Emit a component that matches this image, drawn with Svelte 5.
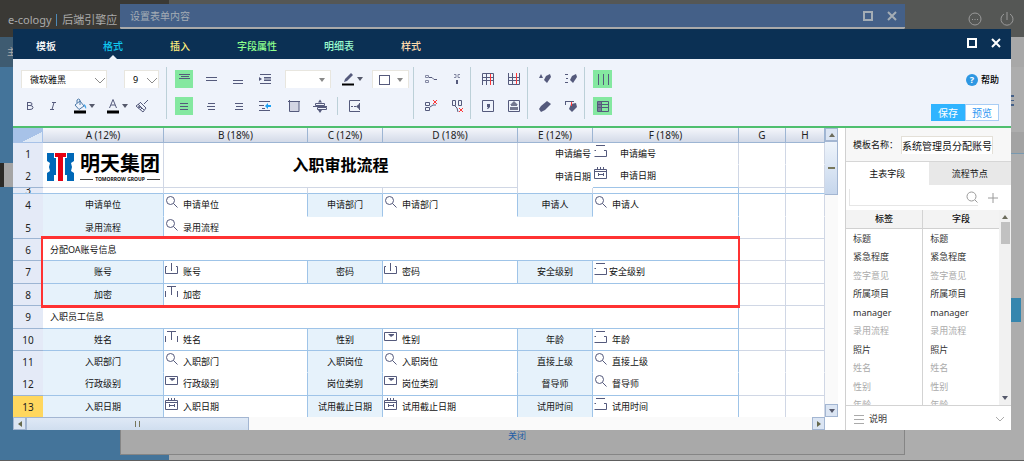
<script>
  const ink = "#555a7c";

  // strokes of the 16x16 toolbar icons, f marks a filled shape
  const icons = {
    bold: [{ d: "M5.5 4v8M5 4.5h3q2 0 2 1.5t-2 1.5h-2.5M8 7.5q3 0 3 2t-3 2h-3" }],
    italic: [{ d: "M7 4.5h4M5 11.5h4M9 4.5l-2 7" }],
    bucket: [
      { d: "M3 7l5-4 4 5-5 3.5zM5 5V2q1.5-2 3 0v5", c: "#4b78a8" },
      { d: "M12 6q3 2 2 5l-2-3", c: "#49a6e8", f: true },
      { d: "M2 12.5h12v3H2z", c: "#000", f: true }
    ],
    color: [{ d: "M4.5 10L8 1.5l3.5 8.5M6 7h4" }, { d: "M2 12.5h12v3H2z", c: "#000", f: true }],
    brush: [{ d: "M14 2l-4 4M6 4l6 6M4 6l6 6M2 8l4-3M4 8l2 1M4 10l3-1M6 12l2-2M9 14l3-4M2 8l7 6" }],
    top: [{ d: "M3 3.5h11M5 5.5h8M3 7.5h11" }],
    middle: [{ d: "M3 6.5h11M3 9.5h11" }],
    bottom: [{ d: "M3 9.5h10M3 12.5h10" }],
    indent: [{ d: "M3 3.5h11M7 6.5h7M7 9.5h7M3 12.5h11M7 8h7" }, { d: "M2 6l3 2-3 2z", f: true }],
    left: [{ d: "M4 5.5h8M4 8.5h8M4 11.5h8" }],
    center: [{ d: "M5 5.5h7M4 8.5h8M5 11.5h7" }],
    right: [{ d: "M5 5.5h8M6 8.5h7M5 11.5h8" }],
    wrap: [
      { d: "M2 3.5h11M2 7.5h5M2 12.5h11M5 10.5h3" },
      { d: "M8 8l3-3v2h3v2h-3v2z", c: "#1da0f2", f: true }
    ],
    pencil: [
      { d: "M4 11l1-3 6-6 2 2-6 6z", f: true },
      { d: "M2 12.5h12v2H2z", c: "#000", f: true }
    ],
    cols: [{ d: "M4 4h9v9H4z", c: "#d3d5e3", f: true }, { d: "M3.5 2v11.5h9.5v-10M2 3.5h12" }],
    split: [{ d: "M3.5 5.5h9v2h-9zM5.5 9.5h9v2h-9zM1 8.5h14" }, { d: "M8 1.5l2 3H6zM8 15l2-3H6z", f: true }],
    width: [{ d: "M13 2.5H2.5v11H13M4 8.5h2M7 8.5h2M12.5 5v7" }, { d: "M9 8.5l3-2.5v5z", f: true }],
    mergeA: [
      { d: "M2.5 4.5h3v2h-3zM2.5 9.5h3v2h-3z", c: "#8488a3" },
      { d: "M6 6.5h3l2 2h3" }
    ],
    mergeB: [{ d: "M5 3.5h2v3H5M11 3.5H9v3h2", c: "#8488a3" }, { d: "M7 9h2v4H7z", f: true }],
    cutA: [{ d: "M2.5 4.5h4v3h-4zM2.5 9.5h4v3h-4zM7 9l3-2h3" }, { d: "M10 2l4 4M14 2l-4 4", c: "#ff3636" }],
    cutB: [{ d: "M3.5 2.5h3v5h-3zM9.5 2.5h3v5h-3zM6 8l2 2 1 4" }, { d: "M10 10l4 4M14 10l-4 4", c: "#ff3636" }],
    gridA: [{ d: "M2.5 14V2.5h11V14M2 6.5h12M2 9.5h12M6.5 3v11" }, { d: "M10.5 3v11", c: "#ff3636" }],
    gridB: [{ d: "M2.5 2v11.5h11V2M2 6.5h12M2 9.5h12M6.5 2v11" }, { d: "M10.5 2v11", c: "#ff3636" }],
    comma: [{ d: "M2.5 2.5h11v11h-11z" }, { d: "M7 6h3v3l-2 2H7l1-2H7z", f: true }],
    stamp: [{ d: "M2.5 2.5h11v11h-11z" }, { d: "M8 3l4 4h-1v1H5V7H4zM4 9h8v3H4z", c: "#74788f", f: true }],
    eraseA: [{ d: "M9 5l4-2 1 3-4 6-3-3z", f: true }, { d: "M2 7l2-4 2 4z", f: true }],
    eraseB: [{ d: "M9 5l4-2 1 3-4 6-3-3z", f: true }, { d: "M2 3.5h3M3 7.5h2M2 11.5h3" }],
    erase: [{ d: "M4 8l6-5 4 3-6 6-4 2-2-3z", f: true }],
    eraseC: [{ d: "M2 3.5h9M2.5 3v4" }, { d: "M8 6l5-1 1 4-5 5-3-3z", f: true }, { d: "M8.5 4v4", c: "#ff3636" }],
    lines: [{ d: "M3.5 3v11M8.5 3v11M13.5 3v11" }],
    table: [
      { d: "M3 4h4v9H3z", c: "#777c95", f: true },
      { d: "M2.5 3.5h11v10h-11zM6.5 3v10M3 6.5h11M3 9.5h11" }
    ],
    search: [{ d: "M10.5 5.5a4 4 0 1 1-8 0a4 4 0 1 1 8 0zM9.5 8.5l4 4" }],
    text: [{ d: "M1.5 6v6M13.5 6v6M3 1.5h9M7.5 2v8" }],
    textin: [{ d: "M3 4.500H1.500v7h12v-7H12M7.500 1v8" }],
    number: [{ d: "M3 1.5h9M3 6.5H1.5M1.5 12.5h12v-6H11" }],
    select: [{ d: "M1.5 2.5h12v8h-12z" }, { d: "M5 4h6v1L8 7z", f: true }],
    date: [{ d: "M1.5 3.5h12v9h-12zM1.5 5.5h12M4.5 1v3M7.5 1v3M10.5 1v3M5.5 7v3M10.5 7v3M6 8.5h4" }]
  };

  const tabs = [
    { name: "模板", cls: "white" },
    { name: "格式", cls: "cyan" },
    { name: "插入", cls: "yellow" },
    { name: "字段属性", cls: "green" },
    { name: "明细表", cls: "mint" },
    { name: "样式", cls: "sand" }
  ];
  let tab = $state("格式");

  const pairs = [
    [["mergeA", "mergeB"], ["cutA", "cutB"]],
    [["gridA", "gridB"], ["comma", "stamp"]],
    [["eraseA", "eraseB"], ["erase", "eraseC"]]
  ];

  const heads = ["A (12%)", "B (18%)", "C (12%)", "D (18%)", "E (12%)", "F (18%)", "G", "H"];

  // each row holds label / icon pairs, a title row spans the form
  const rows = [
    { n: 4, tall: true, open: true, cells: [["申请单位", "search"], ["申请部门", "search"], ["申请人", "search"]] },
    { n: 5, cells: [["录用流程", "search"]] },
    { n: 6, title: "分配OA账号信息" },
    { n: 7, tall: true, cells: [["账号", "textin"], ["密码", "textin"], ["安全级别", "number", "near"]] },
    { n: 8, cells: [["加密", "text"]] },
    { n: 9, tall: true, title: "入职员工信息" },
    { n: 10, cells: [["姓名", "text"], ["性别", "select"], ["年龄", "number"]] },
    { n: 11, open: true, cells: [["入职部门", "search"], ["入职岗位", "search"], ["直接上级", "search"]] },
    { n: 12, tall: true, cells: [["行政级别", "select"], ["岗位类别", "select"], ["督导师", "search"]] },
    { n: 13, last: true, cells: [["入职日期", "date"], ["试用截止日期", "date"], ["试用时间", "number"]] }
  ];

  const fields = [
    ["标题", false],
    ["紧急程度", false],
    ["签字意见", true],
    ["所属项目", false],
    ["manager", false],
    ["录用流程", true],
    ["照片", false],
    ["姓名", true],
    ["性别", true],
    ["年龄", true]
  ];
  let side = $state("主表字段");
  let tplname = $state("系统管理员分配账号流程");
  let query = $state("");
</script>

{#snippet icon(name)}
  <svg class="icon" viewBox="0 0 16 16" aria-hidden="true">
    {#each icons[name] as p}
      <path d={p.d} fill={p.f ? p.c || ink : "none"} stroke={p.f ? "none" : p.c || ink} />
    {/each}
  </svg>
{/snippet}

{#snippet tool(name, on)}
  <button class="tool" class:on aria-label={name}>{@render icon(name)}</button>
{/snippet}

{#snippet combo(name)}
  <button class="combo" aria-label={name}>{@render icon(name)}<i class="caret"></i></button>
{/snippet}

{#snippet winbtns()}
  <div class="winbtns">
    <button aria-label="maximize">
      <svg viewBox="0 0 10 10"><path d="M1 1h8v8H1z" /></svg>
    </button>
    <button aria-label="close">
      <svg viewBox="0 0 10 10"><path d="M1 1l8 8M9 1L1 9" /></svg>
    </button>
  </div>
{/snippet}

{#snippet field(text, name, pos)}
  <div class="field {pos || ''}">{@render icon(name)}<span>{text}</span></div>
{/snippet}

<div class="desktop">
  <header class="top">
    <div class="brand">e-cology <b></b> 后端引擎应</div>
    <div class="user">
      <svg viewBox="0 0 14 14"><circle cx="7" cy="7" r="6" /><path d="M4 7.5h1M6.5 7.5h1M9 7.5h1" /></svg>
      <svg viewBox="0 0 14 14"><path d="M7 0v8M4 2a6 6 0 1 0 6 0" /></svg>
    </div>
  </header>
  <div class="subbar"><div>主</div></div>
  <div class="page">
    <div class="menu"><div class="current"></div></div>
    <div class="content">
      <div class="burger"></div>
      <div class="band"></div>
      <div class="edge"></div>
    </div>
  </div>

  <section class="back">
    <div class="backhead">设置表单内容 {@render winbtns()}</div>
    <div class="backfoot"><a href="#close">关闭</a></div>
  </section>

  <main class="window">
    <nav class="tabs">
      {#each tabs as t}
        <button class={t.cls} class:active={tab === t.name} onclick={() => (tab = t.name)}>{t.name}</button>
      {/each}
      {@render winbtns()}
    </nav>

    <div class="toolbar">
      <div class="group first">
        <div class="line spread">
          <label class="pick font">
            <select aria-label="字体"><option>微软雅黑</option></select>
            <svg viewBox="0 0 10 6"><path d="M0 0l5 5 5-5" /></svg>
          </label>
          <label class="pick size">
            <select aria-label="字号"><option>9</option></select>
            <svg viewBox="0 0 10 6"><path d="M0 0l5 5 5-5" /></svg>
          </label>
        </div>
        <div class="line tight">
          {@render tool("bold")}
          {@render tool("italic")}
          {@render combo("bucket")}
          {@render combo("color")}
          {@render tool("brush")}
        </div>
      </div>
      <hr />
      <div class="group aligns">
        <div class="line wide">
          {@render tool("top", true)}
          {@render tool("middle")}
          {@render tool("bottom")}
          {@render tool("indent")}
        </div>
        <div class="line wide">
          {@render tool("left", true)}
          {@render tool("center")}
          {@render tool("right")}
          {@render tool("wrap")}
        </div>
      </div>
      <div class="group borders">
        <div class="line spread">
          <button class="drop" aria-label="线型"><i class="caret"></i></button>
          {@render combo("pencil")}
          <i></i>
          <button class="drop small" aria-label="边框"><b></b><i class="caret"></i></button>
        </div>
        <div class="line">
          {@render tool("cols")}
          {@render tool("split")}
          <hr />
          {@render tool("width")}
        </div>
      </div>
      <hr />
      {#each pairs as pair}
        <div class="group">
          {#each pair as line}
            <div class="line">
              {#each line as name}
                {@render tool(name)}
              {/each}
            </div>
          {/each}
        </div>
        <hr />
      {/each}
      <div class="group last">
        <div class="line">{@render tool("lines", true)}</div>
        <div class="line">{@render tool("table", true)}</div>
      </div>
      <div class="actions">
        <button class="help"><span>?</span>帮助</button>
        <div>
          <button class="save">保存</button><button class="preview">预览</button>
        </div>
      </div>
    </div>

    <div class="work">
      <div class="sheet">
        <div class="gridrow">
          <table class="grid">
            <colgroup>
              <col class="w30" /><col class="w121" /><col class="w144" /><col class="w75" /><col class="w135" />
              <col class="w75" /><col class="w146" /><col class="w47" /><col />
            </colgroup>
            <thead>
              <tr>
                <th class="corner"></th>
                {#each heads as h}<th>{h}</th>{/each}
              </tr>
            </thead>
            <tbody>
              <tr class="open">
                <th>1</th>
                <td rowspan="2" class="pale">
                  <div class="logo">
                    <svg viewBox="0 0 27 28" aria-hidden="true">
                      <path fill="#0068b7" d="M0 0h7v5h2v17H7v6H0v-8l3-2-1-4 1-4-3-2zM27 0h-7v5h-2v17h2v6h7v-8l-3-2 1-4-1-4 3-2z" />
                      <path fill="#e60012" d="M8 0h11v4h-3v24h-5V4H8z" />
                    </svg>
                    <div>
                      <strong>明天集团</strong>
                      <small>TOMORROW GROUP</small>
                    </div>
                  </div>
                </td>
                <td rowspan="2" colspan="3" class="pale heading">入职审批流程</td>
                <td class="right">申请编号</td>
                <td class="bare">{@render field("申请编号", "number", "far")}</td>
                <td class="pale"></td>
                <td class="pale"></td>
              </tr>
              <tr class="tall">
                <th>2</th>
                <td class="right">申请日期</td>
                <td class="under">{@render field("申请日期", "date", "far")}</td>
                <td class="pale"></td>
                <td class="pale"></td>
              </tr>
              <tr class="thin">
                <th><div>3</div></th>
                {#each heads as h, i}<td class:pale={i < 5 || i > 5}></td>{/each}
              </tr>
              {#each rows as r}
                <tr class:tall={r.tall} class:open={r.open} class:last={r.last}>
                  <th>{r.n}</th>
                  {#if r.title}
                    <td colspan="6" class="title">{r.title}</td>
                  {:else}
                    {#each r.cells as c}
                      <td class="label">{c[0]}</td>
                      <td colspan={r.cells.length === 1 ? 5 : 1}>{@render field(c[0], c[1], c[2])}</td>
                    {/each}
                  {/if}
                  <td class="pale"></td>
                  <td class="pale"></td>
                </tr>
              {/each}
            </tbody>
          </table>
          <div class="vbar">
            <button aria-label="up"><i class="caret up"></i></button>
            <div class="thumb"></div>
            <button aria-label="down"><i class="caret"></i></button>
          </div>
        </div>
        <div class="hbar">
          <button aria-label="left"><i class="caret lt"></i></button>
          <div class="thumb"></div>
          <button aria-label="right"><i class="caret rt"></i></button>
        </div>
        <div class="marker"></div>
      </div>

      <aside class="panel">
        <div class="tplname">
          <label for="tplname">模板名称：</label>
          <input id="tplname" bind:value={tplname} />
        </div>
        <div class="sidetabs">
          {#each ["主表字段", "流程节点"] as s}
            <button class:active={side === s} onclick={() => (side = s)}>{s}</button>
          {/each}
        </div>
        <div class="find">
          <div>
            <input aria-label="搜索" bind:value={query} />
            <svg viewBox="0 0 12 12"><circle cx="5.5" cy="5.5" r="4.5" /><path d="M9 9l2.5 2.5" /></svg>
          </div>
          <button aria-label="add"><svg viewBox="0 0 12 12"><path d="M1 6h10M6 1v10" /></svg></button>
        </div>
        <div class="list">
          <table>
            <thead>
              <tr><th>标签</th><th>字段</th></tr>
            </thead>
            <tbody>
              {#each fields as f}
                <tr class:used={f[1]}><td>{f[0]}</td><td>{f[0]}</td></tr>
              {/each}
            </tbody>
          </table>
          <div class="bar">
            <i class="caret up"></i>
            <div class="thumb"></div>
            <i class="caret"></i>
          </div>
        </div>
        <button class="note">
          <svg viewBox="0 0 10 10"><path d="M0 1.5h10M0 5.5h10M0 9.5h10" /></svg>
          说明
          <svg class="chev" viewBox="0 0 10 10"><path d="M1 3l4 4 4-4" /></svg>
        </button>
      </aside>
    </div>
  </main>
</div>

<style>
  :global(body) {
    background: #ababab;
  }

  .desktop {
    position: relative;
    display: flex;
    flex-direction: column;
    min-height: 100vh;
    overflow: hidden;
    font-family: "Noto Sans", "Noto Sans CJK SC", sans-serif;
    font-size: 9px;
    line-height: 12px;
    color: #111;
  }

  .desktop :global(*) {
    box-sizing: border-box;
  }

  button,
  input,
  select {
    font: inherit;
    color: inherit;
    margin: 0;
    padding: 0;
    border: 0;
    background: none;
    border-radius: 0;
    outline: none;
    min-width: 0;
  }

  button {
    display: flex;
    align-items: center;
    justify-content: center;
    cursor: pointer;
  }

  hr {
    width: 1px;
    margin: 0;
    border: 0;
    background: #bcd0d8;
  }

  .icon {
    width: 16px;
    height: 16px;
    flex: none;
  }

  .caret {
    border: 3px solid transparent;
    border-top: 4px solid #55596b;
    border-bottom: 0;
  }

  .caret.up {
    border-top: 0;
    border-bottom: 4px solid #6c6c5c;
  }

  .caret.lt,
  .caret.rt {
    border: 3px solid transparent;
    border-left: 4px solid #66694d;
    border-right: 0;
  }

  .caret.lt {
    transform: scaleX(-1);
  }

  /* page behind the windows */
  .top {
    display: flex;
    justify-content: space-between;
    height: 37px;
    background: #555755;
    color: #aaa;
  }

  .brand {
    width: 169px;
    padding: 12px 0 0 8px;
    line-height: 16px;
    white-space: nowrap;
    overflow: hidden;
    background: #3a3935;
    font-size: 11px;
  }

  .brand b {
    display: inline-block;
    width: 1px;
    height: 12px;
    margin: 0 2px;
    vertical-align: -2px;
    background: #4d8ab8;
  }

  .user {
    display: flex;
    align-items: center;
    gap: 18px;
    padding-right: 10px;
  }

  .user svg {
    width: 14px;
    height: 14px;
    fill: none;
    stroke: #9a9a9a;
  }

  .subbar {
    height: 30px;
    background: #a8a8a8;
  }

  .subbar div {
    width: 169px;
    height: 30px;
    padding-left: 7px;
    line-height: 30px;
    background: #3e5b71;
    color: #aaa;
  }

  .page {
    flex: 1;
    display: flex;
    border-bottom: 1px solid #5e5e5e;
  }

  .menu {
    width: 169px;
    padding-top: 96px;
    background: #44749a;
  }

  .current {
    height: 24px;
    border-left: 4px solid #2b2a27;
    background: #a5a5a5;
  }

  .content {
    flex: 1;
    display: flex;
    flex-direction: column;
    align-items: flex-end;
    padding-top: 28px;
    background: #adadad;
  }

  .burger {
    width: 14px;
    height: 11px;
    margin-right: 10px;
    border: solid #446088;
    border-width: 2px 0;
    background: linear-gradient(#446088, #446088) center / 100% 1px no-repeat;
  }

  .band {
    width: 40px;
    height: 22px;
    margin-top: 26px;
    border-bottom: 1px solid #7899b0;
    background: #a3a3a3;
  }

  .edge {
    width: 30px;
    height: 24px;
    margin: 144px 3px 0 0;
    background: #3686ae;
  }

  .back {
    position: absolute;
    left: 120px;
    right: 119px;
    top: 4px;
    bottom: 6px;
    display: flex;
    flex-direction: column;
    justify-content: space-between;
    border: 1px solid #858585;
    border-top: 0;
    background: #a9a9a9;
  }

  .backhead {
    display: flex;
    align-items: center;
    height: 24px;
    margin: 0 -1px;
    padding: 0 8px 0 10px;
    border-bottom: 1px solid #aaa;
    background: #446088;
    color: #a4adb5;
    font-size: 10px;
  }

  .backfoot {
    height: 24px;
    text-align: center;
  }

  .backfoot a {
    color: #1d5da6;
    margin-left: 9px;
    text-decoration: none;
  }

  .winbtns {
    display: flex;
    gap: 14px;
    margin-left: auto;
  }

  .winbtns svg {
    width: 10px;
    height: 10px;
    fill: none;
    stroke: currentColor;
    stroke-width: 2;
  }

  /* editor window */
  .window {
    position: absolute;
    left: 13px;
    right: 13px;
    top: 29px;
    background: #fff;
  }

  .tabs {
    display: flex;
    align-items: center;
    gap: 47px;
    height: 30px;
    padding: 0 10px 0 23px;
    background: #0b3054;
    color: #fff;
  }

  .tabs > button {
    position: relative;
    height: 30px;
    padding-top: 4px;
    font-size: 10px;
    font-weight: 500;
  }

  .tabs .winbtns {
    margin-bottom: 3px;
  }

  .tabs .active::after {
    content: "";
    position: absolute;
    bottom: 0;
    left: calc(50% - 4px);
    border: 4px solid transparent;
    border-top: 0;
    border-bottom-color: #eff3fb;
  }

  .cyan { color: #10c8f0; }
  .yellow { color: #ffee7c; }
  .green { color: #8dff8d; }
  .mint { color: #9dffd0; }
  .sand { color: #ffdcae; }

  .toolbar {
    display: flex;
    height: 69px;
    padding: 8px 12px 5px 8px;
    border-bottom: 2px solid #4fbf6f;
    background: #eff3fb;
  }

  .toolbar > hr {
    height: 52px;
  }

  .group {
    display: flex;
    flex-direction: column;
    gap: 9px;
    margin: 3px 4px 0 8px;
  }

  .group.first {
    width: 138px;
    margin-left: 0;
    margin-right: 7px;
  }

  .group.aligns {
    margin-right: 3px;
  }

  .group.borders {
    width: 124px;
  }

  .group.last .tool {
    width: 19px;
  }

  .line {
    display: flex;
    gap: 8px;
    height: 18px;
  }

  .line.spread {
    gap: 0;
    justify-content: space-between;
  }

  .line.tight {
    gap: 5px;
  }

  .line.wide {
    gap: 9px;
  }

  .tool {
    width: 18px;
    height: 18px;
  }

  .tool.on {
    background: #84e8a0;
  }

  .combo {
    width: 28px;
    gap: 1px;
    justify-content: flex-end;
  }

  .pick {
    position: relative;
    display: flex;
    border: 1px solid #e8e6df;
    border-bottom: 0;
    background: #fff;
  }

  .pick.font {
    width: 86px;
  }

  .pick.size {
    width: 35px;
  }

  .pick select {
    appearance: none;
    width: 100%;
    padding-left: 8px;
    color: #000;
  }

  .pick svg {
    position: absolute;
    right: 1px;
    top: 7px;
    width: 10px;
    height: 6px;
    fill: none;
    stroke: #8b8b8b;
    pointer-events: none;
  }

  .drop {
    width: 46px;
    padding-right: 5px;
    justify-content: flex-end;
    border: 1px solid #e8e6df;
    border-bottom: 0;
    background: #fff;
  }

  .drop.small {
    width: 37px;
    gap: 7px;
  }

  .drop b {
    width: 11px;
    height: 10px;
    border: 1px solid #555a7c;
  }

  .drop .caret {
    border-top-color: #888;
  }

  .actions {
    display: flex;
    flex-direction: column;
    align-items: flex-end;
    gap: 16px;
    margin-left: auto;
    padding-top: 4px;
  }

  .help {
    gap: 3px;
    height: 17px;
    color: #000;
    font-weight: 500;
  }

  .help span {
    width: 12px;
    height: 12px;
    border-radius: 6px;
    background: #2e97e2;
    color: #fff;
    font-weight: 700;
  }

  .actions div {
    display: flex;
    font-size: 10px;
  }

  .save,
  .preview {
    width: 34px;
    height: 17px;
    border: 1px solid #a9cdf5;
    background: #fff;
    color: #2e97f2;
  }

  .save {
    border-color: #30b4ff;
    background: #30b4ff;
    color: #fff;
  }

  .work {
    display: flex;
  }

  .sheet {
    position: relative;
    flex: 1;
    min-width: 0;
  }

  .gridrow {
    display: flex;
  }

  .grid {
    flex: 1;
    min-width: 0;
    table-layout: fixed;
    border-collapse: separate;
    border-spacing: 0;
  }

  .w30 { width: 30px; }
  .w121 { width: 121px; }
  .w144 { width: 144px; }
  .w75 { width: 75px; }
  .w135 { width: 135px; }
  .w146 { width: 146px; }
  .w47 { width: 47px; }

  .grid th,
  .grid td {
    height: 22px;
    padding: 0;
    border: solid #9fc4e8;
    border-width: 0 1px 1px 0;
    text-align: center;
    white-space: nowrap;
    overflow: hidden;
  }

  .grid th {
    border-color: #9db5d3;
    font-size: 10px;
    font-weight: 400;
    color: #222;
  }

  .grid thead th {
    height: 15px;
    background: linear-gradient(#f4f6fb, #d3dae8);
  }

  .grid thead .corner {
    border-color: #a7c2e8;
    background: linear-gradient(to bottom right, #a7c2e8 65%, #dde8f6 0);
  }

  .grid tbody th {
    border-right: 0;
    background: #e4eaf7;
  }

  .grid .tall th,
  .grid .tall td {
    height: 23px;
  }

  .grid .open th,
  .grid .open td:not([rowspan]) {
    border-bottom-color: transparent;
  }

  .grid .last th,
  .grid .last td {
    height: 21px;
    border-bottom: 0;
  }

  .grid .last th {
    background: #ffd75e;
  }

  .grid td.pale {
    border-color: #d0d7e5;
  }

  .grid td.right {
    padding-right: 2px;
    border: 0;
    text-align: right;
  }

  .grid td.bare,
  .grid td.under {
    border-right-color: #d0d7e5;
  }

  .grid .thin th,
  .grid .thin td {
    height: 6px;
    border-bottom-color: #9fc4e8;
  }

  .thin th div {
    height: 5px;
    line-height: 5px;
    overflow: hidden;
  }

  .grid td.heading {
    font-size: 16px;
    font-weight: 700;
    color: #000;
  }

  .grid td.label {
    background: #e6f2fb;
  }

  .grid td.title {
    padding-left: 7px;
    text-align: left;
  }

  .field {
    display: flex;
    gap: 3px;
    height: 20px;
  }

  .field.near {
    gap: 0;
  }

  .field.far {
    gap: 11px;
  }

  .field span {
    line-height: 20px;
  }

  .logo {
    display: flex;
    align-items: center;
    gap: 6px;
    padding: 4px 0 0 4px;
  }

  .logo svg {
    width: 27px;
    height: 28px;
    flex: none;
  }

  .logo div {
    display: flex;
    flex-direction: column;
  }

  .logo strong {
    font-size: 20px;
    line-height: 24px;
    color: #000;
  }

  .logo small {
    display: flex;
    align-items: center;
    gap: 2px;
    font-size: 5px;
    line-height: 6px;
    font-weight: 700;
  }

  .logo small::before,
  .logo small::after {
    content: "";
    flex: 1;
    height: 1px;
    background: #444;
  }

  .vbar {
    display: flex;
    flex-direction: column;
    width: 13px;
    background: #fafafa;
  }

  .vbar button,
  .hbar button {
    width: 13px;
    height: 13px;
    border: 1px solid #a3b6d2;
    background: #dbe5f3;
  }

  .vbar .thumb {
    display: flex;
    align-items: center;
    justify-content: center;
    height: 54px;
    margin-bottom: auto;
    border: solid #a3b6d2;
    border-width: 1px 1px 1px 0;
    background: linear-gradient(#eef4fb, #c6d6ec);
  }

  .vbar .thumb::before {
    content: "";
    width: 7px;
    height: 2px;
    background: #77775b;
  }

  .hbar {
    display: flex;
    margin-right: 13px;
    background: #fafafa;
  }

  .hbar .thumb {
    display: flex;
    align-items: center;
    justify-content: center;
    width: 223px;
    margin-right: auto;
    border: 1px solid #a3b6d2;
    border-bottom: 0;
    background: linear-gradient(#dfe9f6, #d0deef);
  }

  .hbar .thumb::before {
    content: "";
    width: 3px;
    height: 6px;
    border: solid #77775b;
    border-width: 0 1px;
  }

  /* highlighted block of rows */
  .marker {
    position: absolute;
    left: 28px;
    top: 108px;
    width: 699px;
    height: 72px;
    border: solid #ff3232;
    border-width: 3px 2px;
    pointer-events: none;
  }

  .panel {
    display: flex;
    flex-direction: column;
    width: 166px;
    margin-left: 7px;
    border-left: 1px solid #d0d0d0;
  }

  .tplname {
    display: flex;
    align-items: center;
    height: 34px;
    padding: 0 18px 0 7px;
    border-bottom: 1px solid #d6d6d6;
    background: #f7f7f7;
  }

  .tplname label {
    flex: none;
    width: 48px;
  }

  .tplname input {
    flex: 1;
    height: 18px;
    border: 1px solid #e4e0d8;
    border-bottom: 0;
    background: #fff;
    font-size: 10px;
  }

  .sidetabs {
    display: flex;
  }

  .sidetabs button {
    flex: 1;
    height: 23px;
    background: #e8e8e8;
  }

  .sidetabs .active {
    background: #fff;
  }

  .find {
    display: flex;
    align-items: center;
    justify-content: space-between;
    height: 25px;
    padding: 0 12px 0 3px;
  }

  .find div {
    display: flex;
    align-items: center;
    width: 129px;
    height: 17px;
    border: solid #e6e6e6;
    border-width: 0 0 1px 1px;
  }

  .find input {
    flex: 1;
  }

  .find svg {
    width: 12px;
    height: 12px;
    fill: none;
    stroke: #9a9a9a;
  }

  .list {
    display: flex;
    align-items: flex-start;
    flex: 1 1 0;
    min-height: 0;
    overflow: hidden;
  }

  .list table {
    flex: 1;
    table-layout: fixed;
    border-collapse: separate;
    border-spacing: 0;
  }

  .list th {
    height: 19px;
    padding: 0;
    border-bottom: 1px solid #d0d0d0;
    background: #f3f3f3;
    font-weight: 500;
  }

  .list td {
    height: 19px;
    padding: 0 7px;
    color: #333;
  }

  .list tr:nth-child(even) td {
    height: 18px;
  }

  .list td:first-child,
  .list th:first-child {
    border-right: 1px solid #d3d3d3;
  }

  .list .used td {
    color: #aaa;
  }

  .bar {
    display: flex;
    flex-direction: column;
    align-items: center;
    align-self: stretch;
    width: 12px;
    padding: 5px 0;
    background: #f1f1f1;
  }

  .bar .thumb {
    width: 9px;
    height: 22px;
    margin: 3px 0 auto;
    background: #c1c1c1;
  }

  .note {
    justify-content: flex-start;
    gap: 5px;
    height: 25px;
    padding: 2px 6px 0 8px;
    border-top: 1px solid #d3d3d3;
    color: #333;
  }

  .note svg {
    width: 10px;
    height: 10px;
    fill: none;
    stroke: #aaa;
  }

  .note .chev {
    margin-left: auto;
  }
</style>
